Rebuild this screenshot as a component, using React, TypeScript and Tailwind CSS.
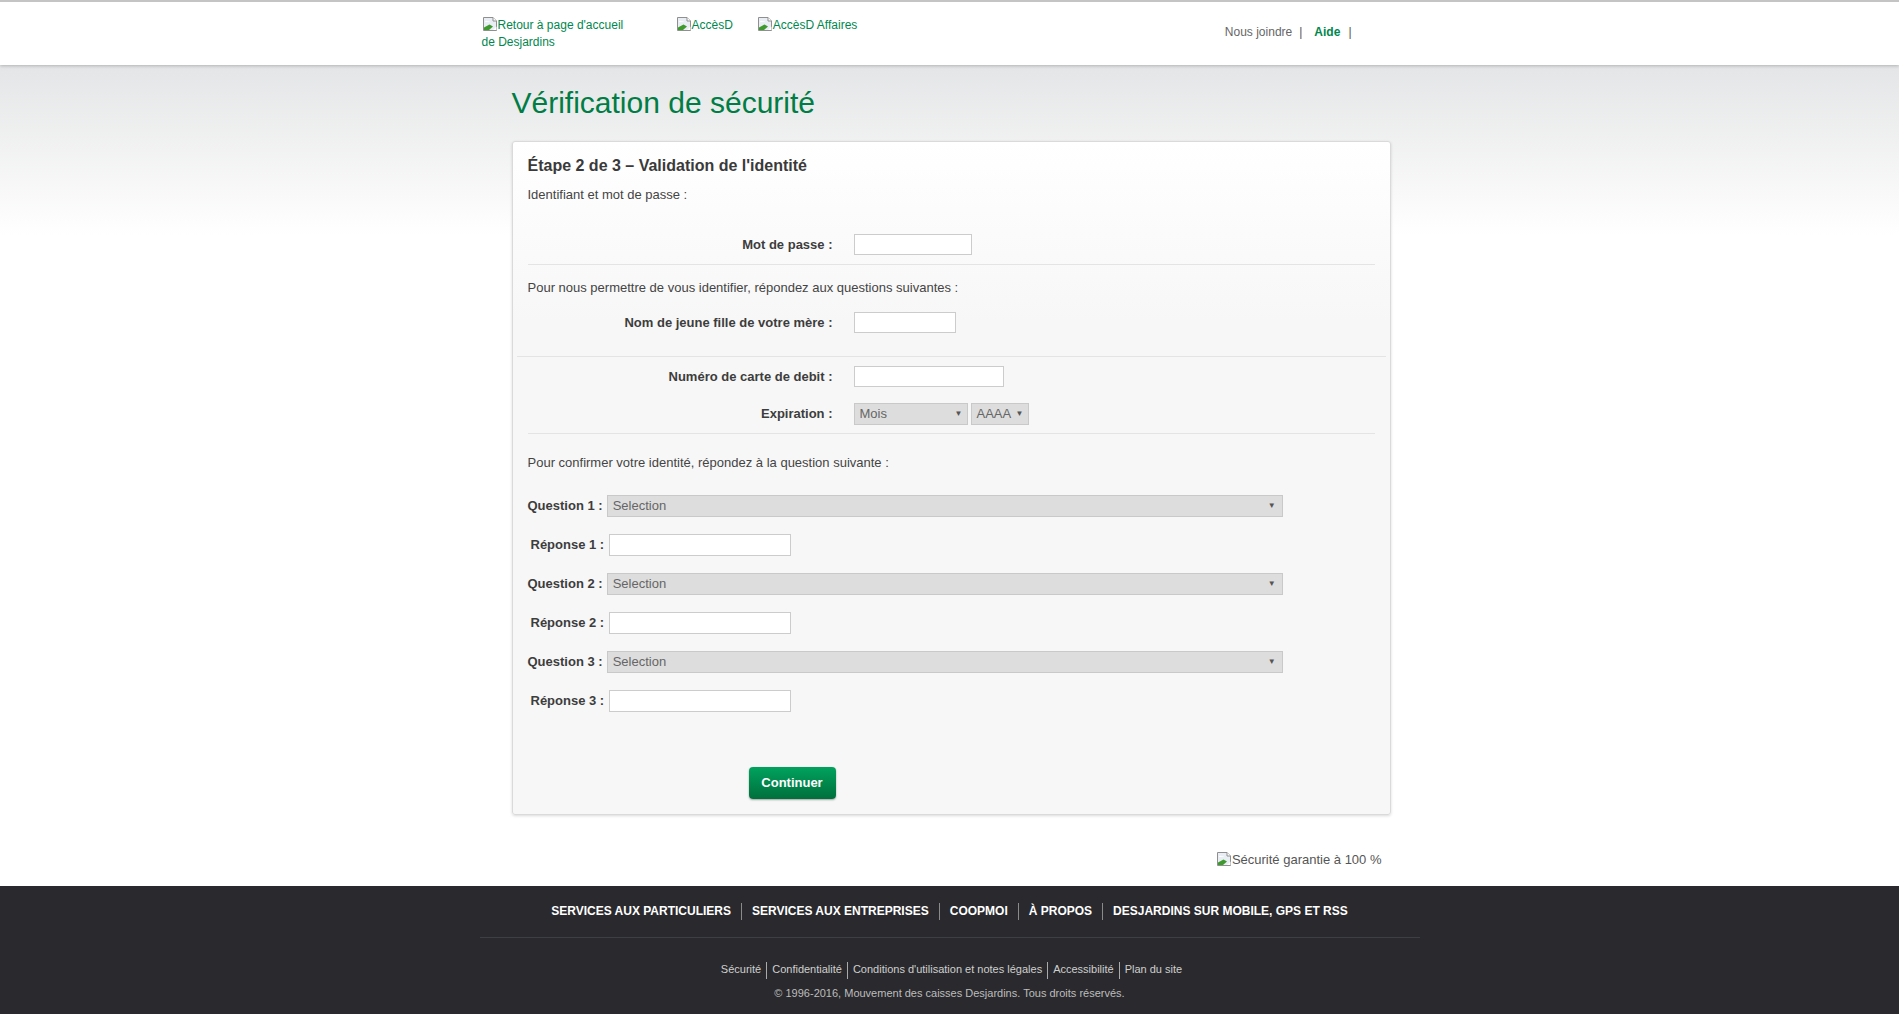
import React from "react";

function BrokenImg() {
  return (
    <svg width="16" height="16" viewBox="0 0 16 16" className="inline-block shrink-0 align-[-3px]">
      <path d="M1.5 1.5h9.5l3.5 3.5v9.5h-13z" fill="#e8eef4" stroke="#8f8f8f" />
      <path d="M11 1.5v3.5h3.5" fill="#ffffff" stroke="#8f8f8f" />
      <path d="M2 14V11.5L7.5 8.5L11 10.5L7 14Z" fill="#3f9a2d" />
      <path d="M3 5.5c1-1 2.2-1 3 0c.8-.6 1.8-.4 2 .4H3z" fill="#ffffff" />
      <path d="M11 14l3.5-3.5V14z" fill="#ffffff" />
    </svg>
  );
}

function Sel({ w, label, pl = "pl-[5px]", pr = "pr-[6px]" }: { w: string; label: string; pl?: string; pr?: string }) {
  return (
    <div
      className={`${w} ${pl} ${pr} flex h-[22px] items-center justify-between border border-[#c9c9c9] bg-[#dddddd] text-[13px] text-[#666]`}
    >
      <span>{label}</span>
      <span className="text-[8px] leading-none text-[#555]">▼</span>
    </div>
  );
}

function Field({ label, w }: { label: string; w: string }) {
  return (
    <div className="flex h-[21px] items-center">
      <div className="w-[305px] text-right text-[13px] font-bold text-[#3d3d3d]">{label}</div>
      <div className={`ml-[21px] h-[21px] ${w} border border-[#cccccc] bg-white`} />
    </div>
  );
}

export default function App() {
  const nav = [
    "SERVICES AUX PARTICULIERS",
    "SERVICES AUX ENTREPRISES",
    "COOPMOI",
    "À PROPOS",
    "DESJARDINS SUR MOBILE, GPS ET RSS",
  ];
  const links = [
    "Sécurité",
    "Confidentialité",
    "Conditions d'utilisation et notes légales",
    "Accessibilité",
    "Plan du site",
  ];
  return (
    <div className="min-h-screen bg-white font-['Liberation_Sans',Arial,Helvetica,sans-serif] text-[#444]">
      <header className="relative z-10 h-[65px] border-t-2 border-[#c4c4c4] bg-white shadow-[0_1px_3px_rgba(0,0,0,0.22)]">
        <div className="mx-auto flex w-[940px] justify-between text-[12px] leading-[17px]">
          <div className="flex pl-[2px] pt-[14px]">
            <a className="block w-[150px] text-[#00874e]">
              <BrokenImg />
              Retour à page d'accueil de Desjardins
            </a>
            <a className="ml-[44px] block text-[#00874e]">
              <BrokenImg />
              AccèsD
            </a>
            <a className="ml-[24px] block text-[#00874e]">
              <BrokenImg />
              AccèsD Affaires
            </a>
          </div>
          <div className="flex pr-[68px] pt-[22px] text-[#666]">
            <span>Nous joindre</span>
            <span className="ml-[7px] mr-[12px] text-[#555]">|</span>
            <span className="font-bold text-[#00874e]">Aide</span>
            <span className="ml-[8px] text-[#555]">|</span>
          </div>
        </div>
      </header>

      <main className="bg-[linear-gradient(to_bottom,#e4e5e6,#ffffff_170px)]">
        <div className="mx-auto w-[940px] pl-[32px]">
          <h1 className="pt-[20px] text-[30px] leading-[36px] text-[#007d45]">Vérification de sécurité</h1>
          <div className="mt-[20px] w-[879px] rounded-[3px] border border-[#dadada] bg-[linear-gradient(to_bottom,#ffffff,#f7f7f7_180px)] shadow-[0_1px_3px_rgba(0,0,0,0.15)]">
            <div className="px-[15px] pb-[15px] pt-[14px]">
              <h2 className="text-[16px] font-bold leading-[20px] text-[#3a3a3a]">
                Étape 2 de 3 – Validation de l'identité
              </h2>
              <p className="mt-[10px] text-[13px] leading-[18px]">Identifiant et mot de passe :</p>

              <div className="mt-[30px] border-b border-[#e4e4e4] pb-[9px]">
                <Field label="Mot de passe :" w="w-[118px]" />
              </div>

              <p className="mt-[14px] text-[13px] leading-[18px]">
                Pour nous permettre de vous identifier, répondez aux questions suivantes :
              </p>
              <div className="mt-[15px]">
                <Field label="Nom de jeune fille de votre mère :" w="w-[102px]" />
              </div>
              <div className="-mx-[11px] mt-[23px] h-px bg-[#e4e4e4]" />

              <div className="mt-[9px]">
                <Field label="Numéro de carte de debit :" w="w-[150px]" />
              </div>
              <div className="mt-[16px] flex h-[21px] items-center">
                <div className="w-[305px] text-right text-[13px] font-bold text-[#3d3d3d]">Expiration :</div>
                <div className="ml-[21px] flex gap-[3px]">
                  <Sel w="w-[114px]" label="Mois" pl="pl-[5px]" pr="pr-[4px]" />
                  <Sel w="w-[58px]" label="AAAA" pl="pl-[5px]" pr="pr-[4px]" />
                </div>
              </div>
              <div className="mt-[9px] h-px bg-[#e4e4e4]" />

              <p className="mt-[20px] text-[13px] leading-[18px]">
                Pour confirmer votre identité, répondez à la question suivante :
              </p>

              <div className="mt-[23px] flex flex-col gap-[17px] text-[13px] font-bold text-[#3d3d3d]">
                {[1, 2, 3].map((n) => (
                  <React.Fragment key={n}>
                    <div className="flex h-[22px] items-center">
                      <span className="whitespace-nowrap">Question {n} :</span>
                      <div className="ml-[4px] font-normal">
                        <Sel w="w-[676px]" label="Selection" />
                      </div>
                    </div>
                    <div className="flex h-[22px] items-center pl-[3px]">
                      <span className="whitespace-nowrap">Réponse {n} :</span>
                      <div className="ml-[5px] h-[22px] w-[182px] border border-[#cccccc] bg-white" />
                    </div>
                  </React.Fragment>
                ))}
              </div>

              <button className="ml-[221px] mt-[55px] h-[32px] w-[87px] rounded-[4px] bg-[linear-gradient(to_bottom,#00a25e,#006f3c)] text-[13px] font-bold text-white shadow-[0_1px_2px_rgba(0,0,0,0.35)]">
                Continuer
              </button>
            </div>
          </div>
        </div>
        <div className="mx-auto flex w-[940px] justify-end pb-[18px] pr-[38px] pt-[36px] text-[13px] leading-[16px] text-[#555]">
          <span>
            <BrokenImg />
            Sécurité garantie à 100 %
          </span>
        </div>
      </main>

      <footer className="h-[128px] bg-[#2a2a2e]">
        <div className="flex justify-center pt-[16px] text-[12px] font-bold leading-[18px] text-white">
          {nav.map((n, i) => (
            <React.Fragment key={n}>
              {i > 0 && <span className="mx-[10px] h-[17px] w-px self-center bg-[#8a8a8a]" />}
              <span>{n}</span>
            </React.Fragment>
          ))}
        </div>
        <div className="mx-auto mt-[17px] h-px w-[940px] bg-[#3e3f44]" />
        <div className="mt-[24px] flex justify-center pl-[4px] text-[11px] leading-[14px] text-[#cfcfcf]">
          {links.map((n, i) => (
            <React.Fragment key={n}>
              {i > 0 && <span className="mx-[5px] h-[17px] w-px self-center bg-[#aaaaaa]" />}
              <span>{n}</span>
            </React.Fragment>
          ))}
        </div>
        <p className="mt-[7px] text-center text-[11px] leading-[14px] text-[#bdbdbd]">
          © 1996-2016, Mouvement des caisses Desjardins. Tous droits réservés.
        </p>
      </footer>
    </div>
  );
}
